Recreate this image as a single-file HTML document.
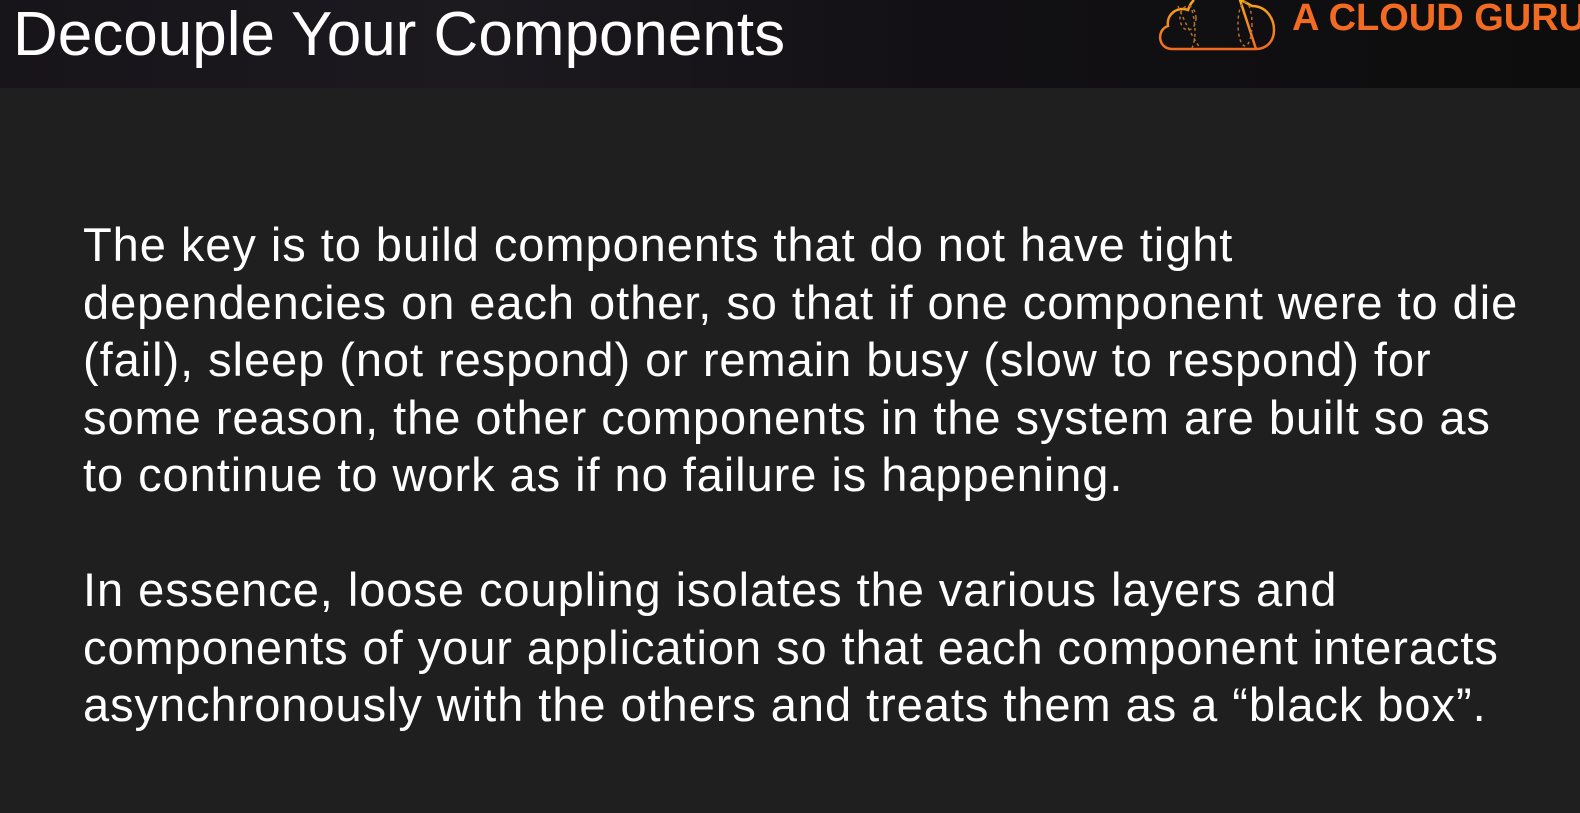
<!DOCTYPE html>
<html><head><meta charset="utf-8"><style>
html,body{margin:0;padding:0;width:1580px;height:813px;overflow:hidden;background:#1f1f1f;font-family:"Liberation Sans",sans-serif;}
.hdr{position:absolute;left:0;top:0;width:1580px;height:88px;background:linear-gradient(90deg,#17141a 0%,#1c1a1f 30%,#121014 60%,#0d0d0d 100%);}
.title{position:absolute;left:13px;top:-1px;color:#fff;font-size:62px;white-space:nowrap;}
.logo{position:absolute;left:1148px;top:0;}
.brand{position:absolute;left:1292px;top:-3px;color:#f26b22;font-weight:bold;font-size:38px;white-space:nowrap;}
.txt{position:absolute;left:83px;color:#fff;font-size:47px;line-height:57.5px;white-space:nowrap;letter-spacing:0.95px;}
</style></head><body>
<div class="hdr"></div>
<div class="title">Decouple Your Components</div>
<svg class="logo" width="130" height="54" viewBox="0 0 130 54">
<defs><linearGradient id="g" x1="0" y1="0" x2="0" y2="1"><stop offset="0" stop-color="#f7a81b"/><stop offset="1" stop-color="#f26b22"/></linearGradient></defs>
<path d="M24 49 C10 49 8 30 20 26 C18 14 30 6 40 10 C42 4 44 2 46 0 M92 0 C98 2 100 4 104 6 C118 6 126 18 126 30 C126 42 118 49 108 49 Z M24 49 L108 49" fill="none" stroke="url(#g)" stroke-width="2.5"/>
<g fill="none" stroke="#b07030" stroke-width="1.5" stroke-dasharray="3 3"><ellipse cx="40" cy="18" rx="8" ry="12"/><ellipse cx="97" cy="24" rx="7" ry="22"/><path d="M30 6 Q40 30 52 48"/><path d="M44 10 Q50 34 44 48"/></g>
</svg>
<div class="brand">A CLOUD GURU</div>
<div class="txt" style="top:216px">The key is to build components that do not have tight<br>dependencies on each other, so that if one component were to die<br>(fail), sleep (not respond) or remain busy (slow to respond) for<br>some reason, the other components in the system are built so as<br>to continue to work as if no failure is happening.</div>
<div class="txt" style="top:561px">In essence, loose coupling isolates the various layers and<br>components of your application so that each component interacts<br>asynchronously with the others and treats them as a “black box”.</div>
</body></html>
